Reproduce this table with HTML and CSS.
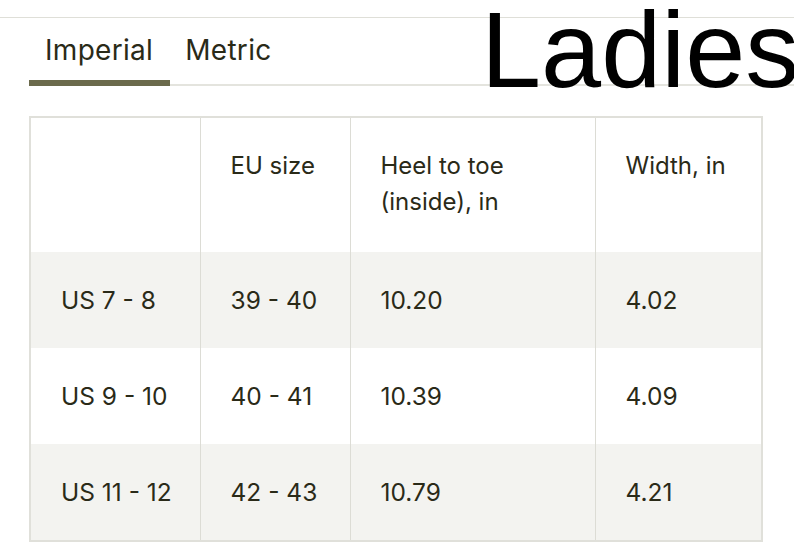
FILE: index.html
```html
<!DOCTYPE html>
<html lang="en">
<head>
<meta charset="utf-8">
<title>Size chart</title>
<link rel="stylesheet" href="styles.css">
</head>
<body>
<div class="page">
  <div class="tabs">
    <div class="tab tab-active">Imperial</div>
    <div class="tab">Metric</div>
  </div>
  <div class="label">Ladies</div>
  <table class="chart">
    <colgroup>
      <col class="c1"><col class="c2"><col class="c3"><col class="c4">
    </colgroup>
    <thead>
      <tr>
        <th></th>
        <th>EU size</th>
        <th>Heel to toe<br>(inside), in</th>
        <th>Width, in</th>
      </tr>
    </thead>
    <tbody>
      <tr class="alt"><td>US 7 - 8</td><td>39 - 40</td><td>10.20</td><td>4.02</td></tr>
      <tr><td>US 9 - 10</td><td>40 - 41</td><td>10.39</td><td>4.09</td></tr>
      <tr class="alt"><td>US 11 - 12</td><td>42 - 43</td><td>10.79</td><td>4.21</td></tr>
    </tbody>
  </table>
</div>
</body>
</html>
```
FILE: styles.css
```css
html, body {
  margin: 0;
  padding: 0;
  background: #ffffff;
}
body {
  font-family: Inter, "Noto Sans", sans-serif;
  color: #2a2a18;
  overflow: hidden;
  width: 794px;
  height: 546px;
}
.page {
  position: relative;
  width: 794px;
  margin-top: 17px;
  border-top: 1px solid #dfdfd8;
}
.tabs {
  display: flex;
  margin-left: 29px;
  border-bottom: 2px solid #e4e4de;
  height: 66px;
}
.tab {
  font-size: 28px;
  line-height: 28px;
  padding: 18px 17px 0 16px;
  letter-spacing: 0.3px;
}
.tab + .tab {
  padding-left: 15px;
}
.tab-active {
  border-bottom: 6px solid #6b6a4c;
  margin-bottom: -2px;
  height: 44px;
  box-sizing: content-box;
}
.label {
  position: absolute;
  left: 481px;
  top: -22px;
  font-family: "Liberation Sans", Arial, sans-serif;
  font-size: 108px;
  line-height: 108px;
  color: #000000;
  white-space: nowrap;
}
.chart {
  margin: 30px 0 0 29px;
  border-collapse: collapse;
  table-layout: fixed;
  width: 734px;
  border: 2px solid #e0e0da;
}
.c1 { width: 170px; }
.c2 { width: 150px; }
.c3 { width: 245px; }
.c4 { width: 167px; }
.chart th,
.chart td {
  border-left: 1px solid #dcdcd5;
  border-right: 1px solid #dcdcd5;
  padding: 0 0 0 30px;
  text-align: left;
}
.chart th {
  font-weight: 400;
  font-size: 24px;
  line-height: 36px;
  vertical-align: top;
  padding-top: 30px;
  height: 104px;
  box-sizing: content-box;
}
.chart td {
  font-size: 24.5px;
  height: 96px;
  vertical-align: middle;
}
.chart tr.alt td {
  background: #f3f3f0;
}
```
